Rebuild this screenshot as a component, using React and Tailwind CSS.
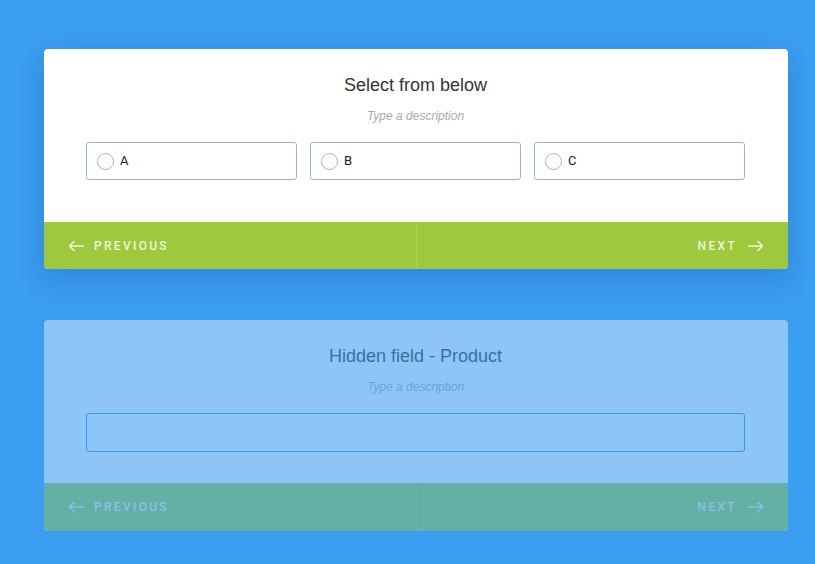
import { useState } from 'react';

const ArrowLeft = () => (
  <svg width="17" height="12" viewBox="0 0 17 12" fill="none" stroke="currentColor" strokeWidth="1.4">
    <path d="M16 6H1.5M6.5 1L1.5 6l5 5" />
  </svg>
);

const ArrowRight = () => (
  <svg width="17" height="12" viewBox="0 0 17 12" fill="none" stroke="currentColor" strokeWidth="1.4">
    <path d="M1 6h14.5M10.5 1l5 5-5 5" />
  </svg>
);

const Footer = ({ tall }) => (
  <div className={`flex ${tall ? 'h-[48px]' : 'h-[47px]'} bg-[#9ec93c] text-[#eef5dc] rounded-b-[4px]`}>
    <button className="flex-1 flex items-center gap-[9px] pl-6 text-[12px] font-medium tracking-[2.3px] border-r border-[#aed157]" style={{ fontFamily: 'Roboto, sans-serif' }}>
      <ArrowLeft /> PREVIOUS
    </button>
    <button className="flex-1 flex items-center justify-end gap-[10px] pr-6 text-[12px] font-medium tracking-[2.3px]" style={{ fontFamily: 'Roboto, sans-serif' }}>
      NEXT <ArrowRight />
    </button>
  </div>
);

const Heading = ({ title }) => (
  <>
    <h2 className="text-center text-[18px] leading-6 text-[#333]">{title}</h2>
    <p className="mt-[11px] text-center text-[12px] leading-4 italic text-[#aaa]">Type a description</p>
  </>
);

export default function App() {
  const [choice, setChoice] = useState(null);

  return (
    <div className="min-h-[564px] bg-[#3a9ef1] pt-[49px] pl-[44px] font-['Liberation_Sans',Arial,sans-serif]">
      <div className="w-[744px] bg-white rounded-[4px] shadow-[0_10px_30px_rgba(0,30,80,0.18)]">
        <div className="pt-6 pl-[42px] pr-[43px] pb-[42px]">
          <Heading title="Select from below" />
          <div className="mt-[18px] grid grid-cols-3 gap-[13px]">
            {['A', 'B', 'C'].map((opt) => (
              <label
                key={opt}
                onClick={() => setChoice(opt)}
                className="flex items-center gap-[6px] h-[38px] px-[10px] border border-[#a5b3c9] rounded-[3px] text-[13px] text-[#222] cursor-pointer"
                style={{ fontFamily: 'Roboto, sans-serif' }}
              >
                <span className="w-[17px] h-[17px] rounded-full border border-[#a5b3c9] flex items-center justify-center">
                  {choice === opt && <span className="w-[9px] h-[9px] rounded-full bg-[#9ec93c]" />}
                </span>
                {opt}
              </label>
            ))}
          </div>
        </div>
        <Footer />
      </div>

      <div className="mt-[51px] w-[744px] bg-white rounded-[4px] opacity-[0.42]">
        <div className="pt-6 pl-[42px] pr-[43px] pb-[31px]">
          <Heading title="Hidden field - Product" />
          <input className="mt-[18px] block w-full h-[39px] border border-[#3a8fe0] rounded-[3px] outline-none px-3" />
        </div>
        <Footer tall />
      </div>
    </div>
  );
}
